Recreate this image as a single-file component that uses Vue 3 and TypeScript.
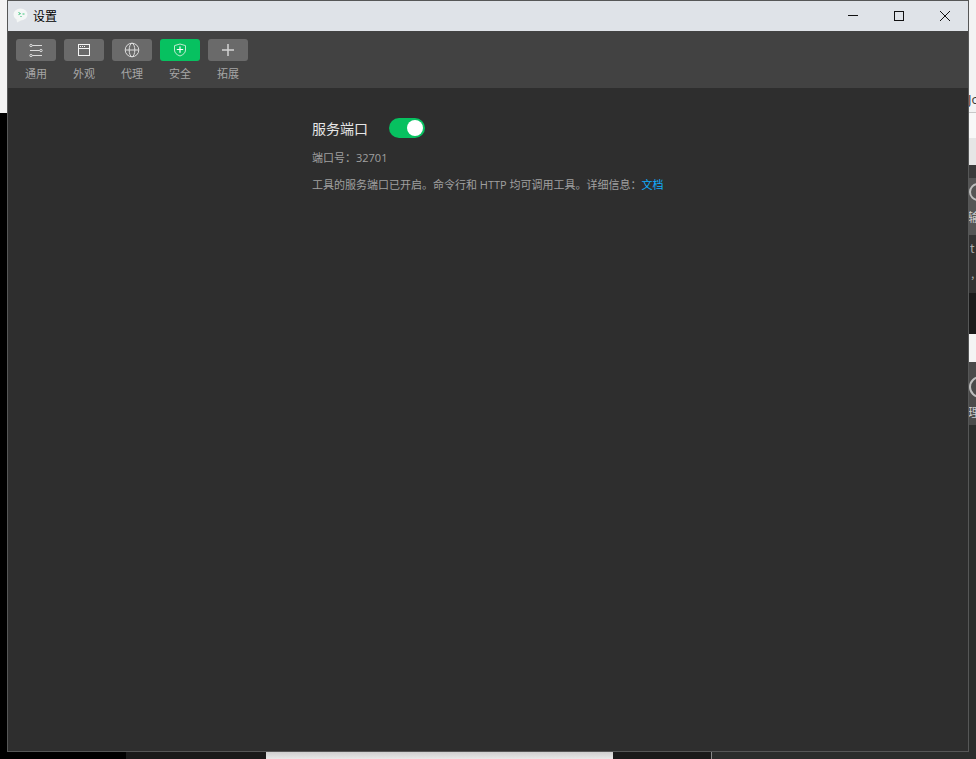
<script setup lang="ts">
const tabs = [
  { key: "general", label: "通用" },
  { key: "look", label: "外观" },
  { key: "proxy", label: "代理" },
  { key: "security", label: "安全", active: true },
  { key: "extend", label: "拓展" },
];

// slices of the window behind, visible to the right of the dialog
const rightStrip = [
  { color: "#f3f3f3", height: 112 },
  { color: "#c8c8c8", height: 1 },
  { color: "#f8f8f8", height: 25 },
  { color: "#e6e6e6", height: 27 },
  { color: "#3a3a3a", height: 13 },
  { color: "#555555", height: 57 },
  { color: "#333333", height: 58 },
  { color: "#1b1b1b", height: 41 },
  { color: "#f4f4f4", height: 28 },
  { color: "#4b4b4b", height: 63 },
  { color: "#2b2d2c", height: 334 },
];
</script>

<template>
  <div class="desktop">
    <div class="left-strip">
      <div class="left-top"></div>
      <div class="left-bottom"></div>
    </div>
    <div class="right-strip">
      <div
        v-for="(s, i) in rightStrip"
        :key="i"
        :style="{ background: s.color, height: s.height + 'px' }"
      ></div>
    </div>
    <div class="bottom-strip">
      <div class="b-black"></div>
      <div class="b-dark"></div>
      <div class="b-light"></div>
      <div class="b-dark2"></div>
      <div class="b-rest"></div>
    </div>

    <div class="behind-text t1">Jo</div>
    <div class="behind-text t2">输</div>
    <div class="behind-text t4">t</div>
    <div class="behind-text t5">,</div>
    <div class="behind-text t3">理</div>
    <div class="behind-ring r1"></div>
    <div class="behind-ring r2"></div>

    <div class="window">
      <div class="titlebar">
        <svg class="app-icon" width="15" height="15" viewBox="0 0 15 15">
          <ellipse cx="7.5" cy="6.5" rx="7" ry="6" fill="#f4f7f6" />
          <path d="M3.5 11 L4 14.5 L8 12.4 Z" fill="#f4f7f6" />
          <path d="M5.5 4.5 L7.5 5.6 L5.5 6.6" stroke="#3cc47c" fill="none" />
          <path d="M9.5 6H11.5" stroke="#3cc47c" />
          <path d="M7 8.5H9" stroke="#8fdcb3" />
        </svg>
        <span class="title">设置</span>
        <div class="win-controls">
          <div class="win-btn">
            <svg width="12" height="12" viewBox="0 0 12 12"><path d="M1 5.5H11" stroke="#111" fill="none" /></svg>
          </div>
          <div class="win-btn">
            <svg width="12" height="12" viewBox="0 0 12 12"><rect x="1.5" y="1.5" width="9" height="9" stroke="#111" fill="none" /></svg>
          </div>
          <div class="win-btn">
            <svg width="12" height="12" viewBox="0 0 12 12"><path d="M1 1L11 11M11 1L1 11" stroke="#111" fill="none" /></svg>
          </div>
        </div>
      </div>

      <div class="toolbar">
        <div v-for="t in tabs" :key="t.key" class="tab">
          <div class="tab-icon" :class="{ active: t.active }">
            <svg v-if="t.key === 'general'" width="20" height="20" viewBox="0 0 20 20" fill="none" stroke="#dcdcdc">
              <path d="M5 5.5H16M4 10.5H14M5 15.5H16" />
              <circle cx="5" cy="5.5" r="1.2" fill="#6a6a6a" />
              <circle cx="15" cy="10.5" r="1.2" fill="#6a6a6a" />
              <circle cx="5" cy="15.5" r="1.2" fill="#6a6a6a" />
            </svg>
            <svg v-else-if="t.key === 'look'" width="20" height="20" viewBox="0 0 20 20" fill="none" stroke="#f4f4f4">
              <rect x="4.5" y="4.5" width="11" height="11" />
              <path d="M4.5 8.5H15.5" />
              <path d="M6 6.5H7M8 6.5H9M10 6.5H11" />
            </svg>
            <svg v-else-if="t.key === 'proxy'" width="20" height="20" viewBox="0 0 20 20" fill="none" stroke="#dcdcdc">
              <circle cx="10" cy="10" r="6.8" />
              <ellipse cx="10" cy="10" rx="2.8" ry="6.8" />
              <path d="M3.2 10H16.8" />
            </svg>
            <svg v-else-if="t.key === 'security'" width="20" height="20" viewBox="0 0 20 20" fill="none" stroke="#bdeccf">
              <path d="M10 4 L15.5 5.6 V10 C15.5 13 13.2 14.8 10 16 C6.8 14.8 4.5 13 4.5 10 V5.6 Z" />
              <path d="M6.8 9.5H13.2M10 6.5V12.8" stroke="#ffffff" stroke-width="1.2" />
            </svg>
            <svg v-else width="20" height="20" viewBox="0 0 20 20" fill="none" stroke="#d4d4d4" stroke-width="1.5">
              <path d="M4 10H16M10 4V16" />
            </svg>
          </div>
          <span class="tab-label">{{ t.label }}</span>
        </div>
      </div>

      <div class="content">
        <div class="panel">
          <div class="head">
            <span class="head-title">服务端口</span>
            <div class="switch"><div class="knob"></div></div>
          </div>
          <p class="port">端口号：32701</p>
          <p class="desc">工具的服务端口已开启。命令行和 HTTP 均可调用工具。详细信息：<a class="link">文档</a></p>
        </div>
      </div>
    </div>
  </div>
</template>

<style scoped>
.desktop {
  position: relative;
  width: 976px;
  height: 759px;
  overflow: hidden;
  background: #2b2d2c;
  font-family: "Noto Sans CJK SC", "Open Sans", sans-serif;
}

.left-strip {
  position: absolute;
  left: 0;
  top: 0;
  width: 8px;
  height: 759px;
  display: flex;
  flex-direction: column;
}

.left-top {
  height: 113px;
  background: #f3f3f3;
}

.left-bottom {
  flex: 1;
  background: #000;
}

.right-strip {
  position: absolute;
  left: 968px;
  top: 0;
  width: 8px;
  height: 759px;
}

.bottom-strip {
  position: absolute;
  left: 0;
  top: 752px;
  width: 976px;
  height: 7px;
  display: flex;
}

.b-black {
  width: 126px;
  background: #000;
}

.b-dark {
  width: 140px;
  background: #1a1a1a;
}

.b-light {
  width: 347px;
  background: linear-gradient(#cfcfcf, #e8e8e8);
}

.b-dark2 {
  width: 99px;
  box-sizing: border-box;
  background: #1a1a1a;
  border-right: 1px solid #8a8a8a;
}

.b-rest {
  flex: 1;
  background: #2b2d2c;
}

.behind-text {
  position: absolute;
  left: 968px;
  font-size: 12px;
  line-height: 14px;
  color: #333;
  width: 8px;
  overflow: hidden;
  white-space: nowrap;
}

.t1 {
  top: 91px;
  left: 968px;
  width: 12px;
  font-size: 13px;
  line-height: 16px;
  font-family: "Open Sans", sans-serif;
}

.t2 {
  top: 210px;
  color: #ccc;
}

.t3 {
  top: 405px;
  color: #ccc;
}

.t4 {
  top: 241px;
  left: 970px;
  color: #aaa;
}

.t5 {
  top: 266px;
  left: 971px;
  color: #aaa;
}

.behind-ring {
  position: absolute;
  box-sizing: border-box;
  border-radius: 50%;
  border: 2px solid #bdbdbd;
}

.r1 {
  left: 969px;
  top: 183px;
  width: 18px;
  height: 18px;
}

.r2 {
  left: 969px;
  top: 376px;
  width: 22px;
  height: 22px;
}

.window {
  position: absolute;
  left: 8px;
  top: 1px;
  width: 960px;
  height: 750px;
  display: flex;
  flex-direction: column;
  background: #2e2e2e;
  box-shadow: 0 0 0 1px #565757;
}

.titlebar {
  height: 30px;
  flex-shrink: 0;
  display: flex;
  align-items: center;
  background: #dfe3e8;
  padding-left: 5px;
}

.app-icon {
  flex-shrink: 0;
  margin-bottom: 2px;
}

.title {
  margin-left: 5px;
  margin-bottom: 2px;
  font-size: 12px;
  color: #000;
}

.win-controls {
  margin-left: auto;
  display: flex;
  height: 100%;
  box-sizing: border-box;
  padding-bottom: 1px;
}

.win-btn {
  width: 46px;
  display: flex;
  align-items: center;
  justify-content: center;
}

.toolbar {
  height: 57px;
  flex-shrink: 0;
  box-sizing: border-box;
  padding: 8px 0 0 8px;
  display: flex;
  gap: 8px;
  background: #424242;
}

.tab {
  width: 40px;
  display: flex;
  flex-direction: column;
  align-items: center;
}

.tab-icon {
  width: 40px;
  height: 22px;
  border-radius: 3px;
  background: #6a6a6a;
  display: flex;
  align-items: center;
  justify-content: center;
}

.tab-icon.active {
  background: #07c160;
}

.tab-label {
  margin-top: 4px;
  font-size: 11px;
  line-height: 16px;
  color: #a6a6a6;
}

.content {
  flex: 1;
  padding: 29px 0 0 304px;
}

.panel {
  width: 500px;
}

.head {
  display: flex;
  align-items: center;
  height: 22px;
}

.head-title {
  font-size: 14px;
  color: #e6e6e6;
  width: 77px;
}

.switch {
  width: 36px;
  height: 20px;
  border-radius: 10px;
  background: #07c160;
  position: relative;
}

.knob {
  position: absolute;
  right: 2px;
  top: 2px;
  width: 16px;
  height: 16px;
  border-radius: 50%;
  background: #fff;
}

.port,
.desc {
  margin: 0;
  font-size: 11px;
  line-height: 16px;
  color: #a0a0a0;
  font-family: "Open Sans", "Noto Sans CJK SC", sans-serif;
}

.port {
  margin-top: 11px;
}

.desc {
  margin-top: 11px;
}

.link {
  color: #10aeff;
}
</style>

<style>
html,
body {
  margin: 0;
  background: #2b2d2c;
}
</style>
